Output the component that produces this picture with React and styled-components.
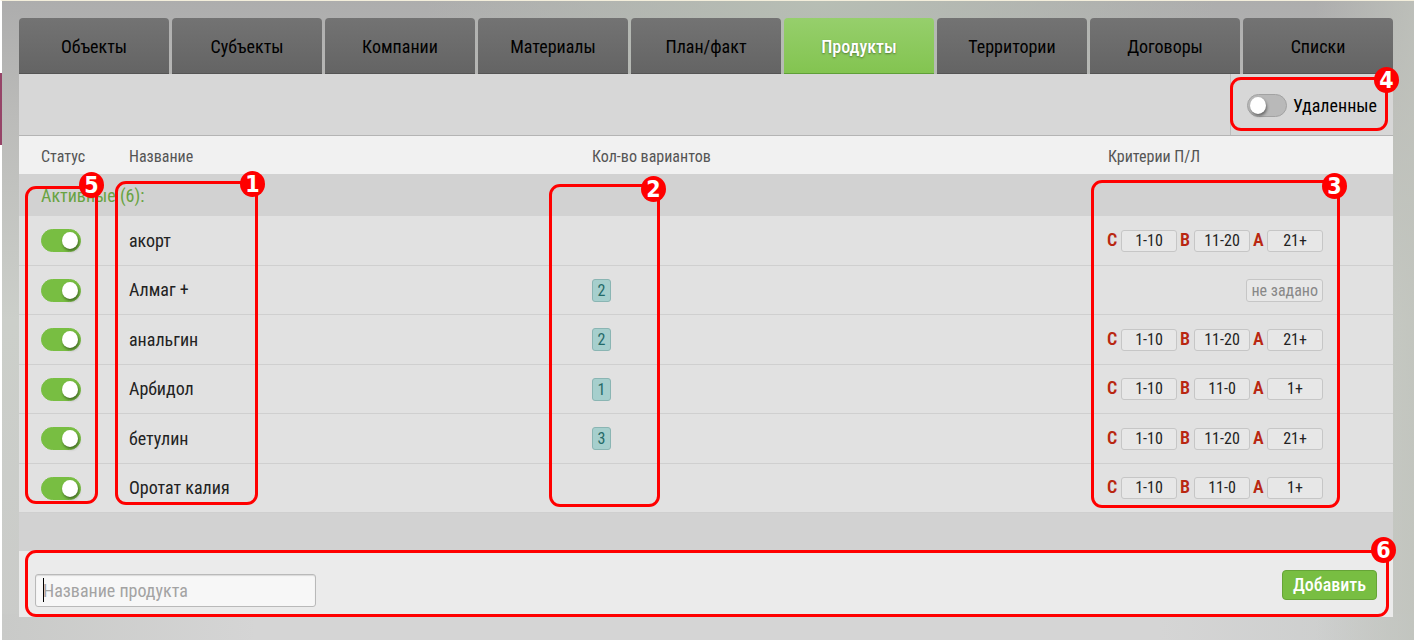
import React, { useState } from "react";
import styled, { createGlobalStyle } from "styled-components";

const Global = createGlobalStyle`
  *, *::before, *::after { box-sizing: border-box; }
  body {
    margin: 0;
    font-family: "Roboto Condensed", "Liberation Sans Narrow", Roboto, sans-serif;
    font-size: 18px;
    line-height: 24px;
    color: #222;
    background: #cacdc8;
  }
  input, button { font: inherit; color: inherit; }
`;

const Page = styled.div`
  position: relative;
  min-height: 100vh;
  padding: 17px 21px 23px 17px;
  border-top: 1px solid #f3eedb;
  border-left: 2px solid #fff;
  background:
    radial-gradient(ellipse 28% 30% at 58% 0%, #b7beb4 0%, transparent 100%),
    linear-gradient(to right, transparent 93%, rgba(192, 195, 188, 0.8) 100%),
    linear-gradient(to right, #c9cac8 0%, #d5d5d5 18%, #d5d5d5 82%, #cacccb 100%) bottom / 100% 26px no-repeat,
    linear-gradient(to bottom, #adadad 0%, #bbbbb9 18%, #cccfca 50%, #cacbc9 100%);
`;

const EdgeMark = styled.span`
  position: absolute;
  left: -2px;
  top: 72px;
  width: 2px;
  height: 72px;
  background: #964468;
`;

const Panel = styled.main`
  position: relative;
`;

const Tabs = styled.nav`
  display: flex;
  gap: 3px;
`;

const Tab = styled.a`
  flex: 1 1 0;
  display: flex;
  align-items: center;
  justify-content: center;
  height: 56px;
  padding-top: 2px;
  border-radius: 4px 4px 0 0;
  border-bottom: 1px solid ${(p) => (p.$active ? "#5f9f38" : "#545454")};
  background: ${(p) =>
    p.$active
      ? "linear-gradient(#96cf6c, #83c450)"
      : "linear-gradient(#737373, #646464)"};
  color: ${(p) => (p.$active ? "#fff" : "#000")};
  font-weight: ${(p) => (p.$active ? 500 : 400)};
  text-shadow: ${(p) => (p.$active ? "0 1px 2px rgba(0,0,0,.4)" : "none")};
  text-decoration: none;
`;

const Toolbar = styled.div`
  display: flex;
  justify-content: flex-end;
  height: 62px;
  background: #d7d7d7;
  border-bottom: 1px solid #b4b4b4;
`;

const DeletedFilter = styled.label`
  display: flex;
  align-items: center;
  gap: 6px;
  padding: 2px 16px 0;
  border-left: 1px solid #bcbcbc;
  color: #000;
`;

const Switch = styled.input.attrs({ type: "checkbox" })`
  appearance: none;
  display: block;
  flex: none;
  width: 40px;
  height: 23px;
  margin: 0;
  padding: 2px;
  border: 1px solid #a2a2a2;
  border-radius: 12px;
  background: #b9b9b9;

  &::before {
    content: "";
    display: block;
    width: 16px;
    height: 17px;
    border-radius: 50%;
    background: #fff;
    box-shadow: 1px 2px 3px rgba(0, 0, 0, 0.45);
  }
  &:checked {
    border-color: #78be42;
    background: #78be42;
  }
  &:checked::before { margin-left: 18px; }
`;

const Table = styled.table`
  width: 100%;
  table-layout: fixed;
  border-collapse: separate;
  border-spacing: 0;
`;

const Col = styled.col`
  width: ${(p) => p.$w};
`;

const HeadCell = styled.th`
  height: 38px;
  padding: 4px 0 0 11px;
  background: #f1f1f1;
  color: #555;
  font-size: 16px;
  font-weight: 400;
  text-align: left;
  &:first-child { padding-left: 22px; }
`;

const GroupCell = styled.th`
  height: 42px;
  padding: 2px 0 0 22px;
  background: #d2d2d2;
  color: #68a341;
  font-weight: 400;
  text-align: left;
`;

const Row = styled.tr`
  height: 49px;
  &:nth-child(odd) { height: 50px; }
`;

const Cell = styled.td`
  padding: 0 0 0 11px;
  background: #e1e1e1;
  border-bottom: 1px solid #cfcfcf;
  &:first-child { padding-left: 22px; }
  &:last-child { padding-right: 70px; }
`;

const Count = styled.button`
  display: block;
  width: 19px;
  height: 23px;
  padding: 0;
  border: 1px solid #8ab5b3;
  border-radius: 3px;
  background: #a6cfcd;
  color: #246a68;
  font-size: 16px;
  line-height: 21px;
`;

const Criteria = styled.div`
  display: flex;
  justify-content: flex-end;
  gap: 3px;
`;

const Criterion = styled.label`
  display: flex;
  align-items: center;
  gap: 4px;
`;

const Grade = styled.span`
  width: 10px;
  padding-bottom: 2px;
  color: #b92711;
  line-height: 22px;
  font-weight: 600;
`;

const Range = styled.input`
  width: 56px;
  height: 22px;
  padding: 0;
  border: 1px solid #c6c6c6;
  border-radius: 3px;
  background: #e7e7e7;
  font-size: 16px;
  text-align: center;
`;

const Unset = styled.button`
  height: 23px;
  padding: 0 4px;
  border: 1px solid #c6c6c6;
  border-radius: 3px;
  background: #e7e7e7;
  color: #888;
  font-size: 16px;
  line-height: 21px;
`;

const Footer = styled.form`
  display: flex;
  align-items: flex-start;
  justify-content: space-between;
  margin: 0;
  padding: 19px 16px 10px;
  border-top: 38px solid #d2d2d2;
  background: #ebebeb;
`;

const Field = styled.div`
  position: relative;
  width: 281px;
  padding-top: 4px;
`;

const NameInput = styled.input`
  display: block;
  width: 100%;
  height: 33px;
  padding: 0 7px;
  border: 1px solid #b9b9b9;
  border-radius: 3px;
  background: #f7f7f7;
  box-shadow: inset 0 1px 1px rgba(0, 0, 0, 0.12);
  &::placeholder { color: #a3a3a3; opacity: 1; }
`;

const Caret = styled.span`
  position: absolute;
  left: 8px;
  top: 8px;
  width: 1px;
  height: 24px;
  background: #000;
`;

const AddButton = styled.button`
  height: 30px;
  padding: 0 10px;
  border: 1px solid #66a437;
  border-radius: 4px;
  background: #78be42;
  color: #fff;
  font-weight: 500;
  line-height: 28px;
`;

const Callout = styled.div`
  position: absolute;
  top: ${(p) => p.$top}px;
  left: ${(p) => p.$left};
  right: ${(p) => p.$right};
  width: ${(p) => p.$width};
  height: ${(p) => p.$height}px;
  border: 3px solid #f00;
  border-radius: 11px;
  pointer-events: none;
`;

const Badge = styled.span`
  position: absolute;
  top: ${(p) => p.$y}px;
  right: ${(p) => p.$x}px;
  display: flex;
  align-items: center;
  justify-content: center;
  width: 25px;
  height: 26px;
  border-radius: 50%;
  background: #f00;
  color: #fff;
  font: 700 23px/26px "DejaVu Sans Condensed", "DejaVu Sans", sans-serif;
`;

const TABS = [
  "Объекты", "Субъекты", "Компании", "Материалы", "План/факт",
  "Продукты", "Территории", "Договоры", "Списки",
];

const PRODUCTS = [
  { name: "акорт", ranges: ["1-10", "11-20", "21+"] },
  { name: "Алмаг +", count: 2 },
  { name: "анальгин", count: 2, ranges: ["1-10", "11-20", "21+"] },
  { name: "Арбидол", count: 1, ranges: ["1-10", "11-0", "1+"] },
  { name: "бетулин", count: 3, ranges: ["1-10", "11-20", "21+"] },
  { name: "Оротат калия", ranges: ["1-10", "11-0", "1+"] },
];

const CALLOUTS = [
  { n: 5, top: 168, left: "6px", width: "73px", height: 318, x: -9, y: -17 },
  { n: 1, top: 163, left: "96px", width: "143px", height: 324, x: -10, y: -13 },
  { n: 2, top: 166, left: "530px", width: "111px", height: 323, x: -9, y: -11 },
  { n: 3, top: 162, right: "53px", width: "249px", height: 328, x: -10, y: -10 },
  { n: 4, top: 59, right: "5px", width: "158px", height: 54, x: -14, y: -13 },
  { n: 6, top: 532, left: "6px", right: "4px", height: 67, x: -10, y: -16 },
];

export default function App() {
  const [name, setName] = useState("");
  return (
    <Page>
      <Global />
      <EdgeMark />
      <Panel>
        <Tabs>
          {TABS.map((t) => (
            <Tab key={t} href="#" $active={t === "Продукты"}>{t}</Tab>
          ))}
        </Tabs>
        <Toolbar>
          <DeletedFilter>
            <Switch />
            Удаленные
          </DeletedFilter>
        </Toolbar>
        <Table>
          <colgroup>
            <Col $w="99px" />
            <Col $w="33.7%" />
            <Col $w="auto" />
            <Col $w="296px" />
          </colgroup>
          <thead>
            <tr>
              <HeadCell>Статус</HeadCell>
              <HeadCell>Название</HeadCell>
              <HeadCell>Кол-во вариантов</HeadCell>
              <HeadCell>Критерии П/Л</HeadCell>
            </tr>
            <tr>
              <GroupCell colSpan={4}>Активные (6):</GroupCell>
            </tr>
          </thead>
          <tbody>
            {PRODUCTS.map((p) => (
              <Row key={p.name}>
                <Cell><Switch defaultChecked aria-label={p.name} /></Cell>
                <Cell>{p.name}</Cell>
                <Cell>{p.count && <Count>{p.count}</Count>}</Cell>
                <Cell>
                  <Criteria>
                    {p.ranges ? (
                      p.ranges.map((r, i) => (
                        <Criterion key={i}>
                          <Grade>{"CBA"[i]}</Grade>
                          <Range defaultValue={r} />
                        </Criterion>
                      ))
                    ) : (
                      <Unset>не задано</Unset>
                    )}
                  </Criteria>
                </Cell>
              </Row>
            ))}
          </tbody>
        </Table>
        <Footer onSubmit={(e) => e.preventDefault()}>
          <Field>
            <NameInput
              aria-label="Название продукта"
              placeholder="Название продукта"
              value={name}
              onChange={(e) => setName(e.target.value)}
            />
            {!name && <Caret />}
          </Field>
          <AddButton>Добавить</AddButton>
        </Footer>
        {CALLOUTS.map((c) => (
          <Callout key={c.n} $top={c.top} $left={c.left} $right={c.right} $width={c.width} $height={c.height}>
            <Badge $x={c.x} $y={c.y}>{c.n}</Badge>
          </Callout>
        ))}
      </Panel>
    </Page>
  );
}
